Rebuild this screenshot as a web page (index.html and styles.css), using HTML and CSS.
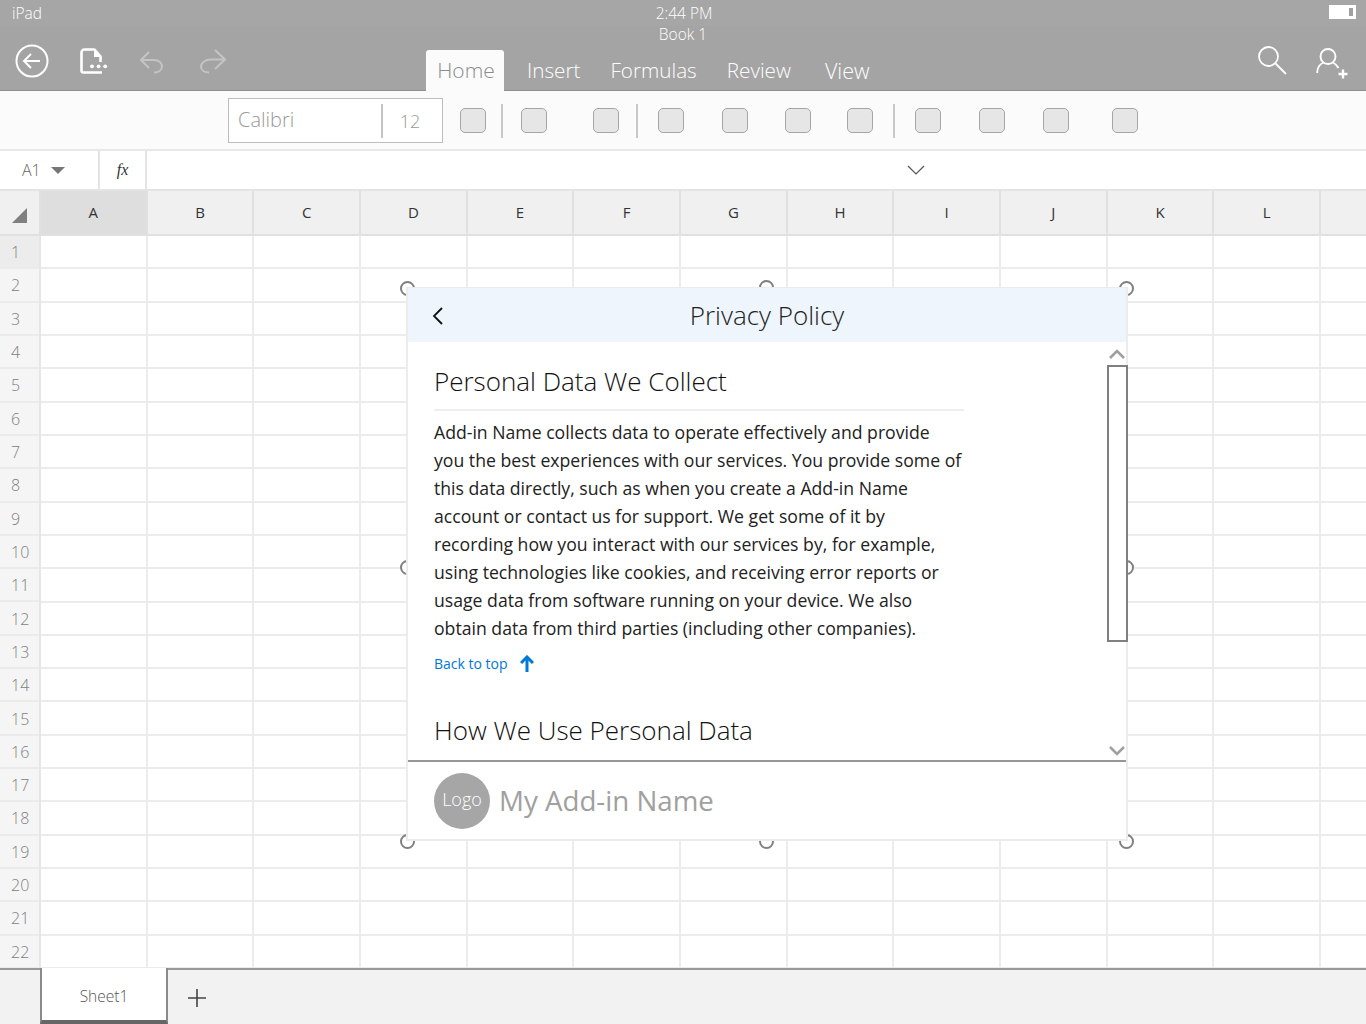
FILE: index.html
```html
<!DOCTYPE html>
<html lang="en">
<head>
<meta charset="utf-8">
<title>Book 1</title>
<link rel="stylesheet" href="styles.css">
</head>
<body>
<div class="app">
  <header class="header">
    <div class="status">
      <span class="device">iPad</span>
      <span class="time">2:44 PM</span>
      <span class="battery"><i></i></span>
    </div>
    <div class="title">Book 1</div>
    <div class="nav">
      <div class="nav-left">
        <svg class="ic-back" viewBox="0 0 34 34" fill="none" stroke="#fff"><circle cx="17" cy="17" r="15.5" stroke-width="2"/><path d="M25 17H9M16 10l-7 7 7 7" stroke-width="2"/></svg>
        <svg class="ic-doc" viewBox="0 0 28 26" fill="none"><path d="M20.5 14V8.5L14.5 1.5H4.5a3 3 0 0 0-3 3v18a2 2 0 0 0 2 2H22" stroke="#fff" stroke-width="2.6" stroke-linejoin="round"/><path d="M14 1.5v7.5h7z" fill="#fff"/><circle cx="12" cy="18.3" r="1.9" fill="#fff"/><circle cx="18.6" cy="18.3" r="1.9" fill="#fff"/><circle cx="25.2" cy="18.3" r="1.9" fill="#fff"/></svg>
        <svg class="ic-undo" viewBox="0 0 24 24" fill="none" stroke="#c4c4c4" stroke-width="2"><path d="M9 2L1 10l8 8M1 10h13c5 0 8 3 8 6.5s-3 6-8 6"/></svg>
        <svg class="ic-redo" viewBox="0 0 26 26" fill="none" stroke="#c4c4c4" stroke-width="2"><path d="M15 2l10 9.5L15 21M25 11.5H11c-6 0-10 3.5-10 7s3 6 8 6"/></svg>
      </div>
      <nav class="tabs">
        <span class="tab active">Home</span>
        <span class="tab t-insert">Insert</span>
        <span class="tab t-formulas">Formulas</span>
        <span class="tab t-review">Review</span>
        <span class="tab t-view">View</span>
      </nav>
      <div class="nav-right">
        <svg class="ic-search" viewBox="0 0 29 29" fill="none" stroke="#fff" stroke-width="1.8"><circle cx="10.5" cy="10.5" r="9.5"/><path d="M17 17l11 11"/></svg>
        <svg class="ic-person" viewBox="0 0 32 34" fill="none" stroke="#fff" stroke-width="1.9"><circle cx="12" cy="10.5" r="7.5"/><path d="M1.2 27c0-5 3-9 6.3-10.5M16.8 16.5c2 1 4.6 3 5.7 5.5"/><path d="M27 23.5v9M22.5 28h9" stroke-width="2.4"/></svg>
      </div>
    </div>
  </header>

  <section class="ribbon">
    <div class="fontbox"><span class="fname">Calibri</span><span class="fsize">12</span></div>
    <span class="btn m17"></span><span class="sep m15"></span>
    <span class="btn m18"></span><span class="btn m46"></span><span class="sep m17"></span>
    <span class="btn m20"></span><span class="btn m38"></span><span class="btn m37"></span><span class="btn m36"></span><span class="sep m20"></span>
    <span class="btn m20"></span><span class="btn m38"></span><span class="btn m38"></span><span class="btn m43"></span>
  </section>

  <section class="formula">
    <div class="namebox">A1<span class="caret"></span></div>
    <div class="fx">fx</div>
    <div class="finput"><svg class="ic-chev" viewBox="0 0 18 11" fill="none" stroke="#555" stroke-width="1.2"><path d="M1 1l8 8 8-8"/></svg></div>
  </section>

  <section class="sheet">
    <div class="colheads">
      <div class="corner"><span class="tri"></span></div>
      <div class="ch sel">A</div><div class="ch">B</div><div class="ch">C</div><div class="ch">D</div><div class="ch">E</div><div class="ch">F</div><div class="ch">G</div><div class="ch">H</div><div class="ch">I</div><div class="ch">J</div><div class="ch">K</div><div class="ch">L</div><div class="ch"></div>
    </div>
    <div class="body">
      <div class="rowheads">
        <div class="rh sel">1</div><div class="rh">2</div><div class="rh">3</div><div class="rh">4</div><div class="rh">5</div><div class="rh">6</div><div class="rh">7</div><div class="rh">8</div><div class="rh">9</div><div class="rh">10</div><div class="rh">11</div><div class="rh">12</div><div class="rh">13</div><div class="rh">14</div><div class="rh">15</div><div class="rh">16</div><div class="rh">17</div><div class="rh">18</div><div class="rh">19</div><div class="rh">20</div><div class="rh">21</div><div class="rh">22</div>
      </div>
      <div class="cells"></div>
    </div>
  </section>

  <footer class="sheetbar">
    <div class="sheettab">Sheet1</div>
    <svg class="ic-plus" viewBox="0 0 18 18" fill="none" stroke="#444" stroke-width="1.6"><path d="M9 0v18M0 9h18"/></svg>
  </footer>

  <div class="overlay">
    <span class="h h-tl"></span><span class="h h-tc"></span><span class="h h-tr"></span>
    <span class="h h-ml"></span><span class="h h-mr"></span>
    <span class="h h-bl"></span><span class="h h-bc"></span><span class="h h-br"></span>
    <div class="panel">
      <div class="panel-head">
        <svg class="ic-left" viewBox="0 0 11 18" fill="none" stroke="#111" stroke-width="1.8"><path d="M10 1L2 9l8 8"/></svg>
        <span class="panel-title">Privacy Policy</span>
      </div>
      <div class="panel-body">
        <div class="content">
          <h2 class="h-first">Personal Data We Collect</h2>
          <p>Add-in Name collects data to operate effectively and provide<br>you the best experiences with our services. You provide some of<br>this data directly, such as when you create a Add-in Name<br>account or contact us for support. We get some of it by<br>recording how you interact with our services by, for example,<br>using technologies like cookies, and receiving error reports or<br>usage data from software running on your device. We also<br>obtain data from third parties (including other companies).</p>
          <a class="top" href="#">Back to top<svg class="ic-up" viewBox="0 0 14 17" fill="none" stroke="#0078d7" stroke-width="3"><path d="M7 17V2M1 8l6-6 6 6"/></svg></a>
          <h2 class="h-second">How We Use Personal Data</h2>
        </div>
        <div class="scroll">
          <svg class="ic-sc" viewBox="0 0 16 10" fill="none" stroke="#a0a0a0" stroke-width="2.6"><path d="M1 9l7-7 7 7"/></svg>
          <div class="thumb"></div>
          <svg class="ic-sc last" viewBox="0 0 16 10" fill="none" stroke="#a0a0a0" stroke-width="2.6"><path d="M1 1l7 7 7-7"/></svg>
        </div>
      </div>
      <div class="panel-foot">
        <span class="logo">Logo</span>
        <span class="addin">My Add-in Name</span>
      </div>
    </div>
  </div>
</div>
</body>
</html>
```
FILE: styles.css
```css
* { box-sizing: border-box; }
html, body { margin: 0; padding: 0; }
body { background: #fff; font-family: "Open Sans", "Noto Sans", sans-serif; font-weight: 300; color: #222; }
.app { position: relative; width: 1366px; height: 1024px; overflow: hidden; display: flex; flex-direction: column; }

/* header */
.header { height: 91px; background: #a4a4a4; border-bottom: 1px solid #8e8e8e; color: #fff; display: flex; flex-direction: column; }
.status { height: 26px; background: #a6a6a6; display: grid; grid-template-columns: 1fr auto 1fr; align-items: center; font-size: 15.5px; padding: 0 10px 0 12px; }
.battery { justify-self: end; width: 27px; height: 14px; background: #fff; position: relative; margin-bottom: 2px; }
.battery i { position: absolute; right: 3px; top: 3px; width: 4px; height: 8px; background: #a0a0a0; }
.title { height: 18px; line-height: 17px; text-align: center; font-size: 15.5px; }
.nav { height: 46px; display: grid; grid-template-columns: 426px 1fr auto; }
.nav-left { display: flex; align-items: flex-start; padding-left: 15px; }
.ic-back { width: 34px; height: 34px; }
.ic-doc { width: 28px; height: 26px; margin: 4px 0 0 31px; }
.ic-undo { width: 24px; height: 24px; margin: 6px 0 0 32px; }
.ic-redo { width: 26px; height: 26px; margin: 4px 0 0 36px; }
.tabs { display: flex; align-items: flex-end; font-size: 20.7px; }
.tab { height: 40px; line-height: 41px; white-space: nowrap; }
.tab.active { width: 78px; margin-bottom: -1px; height: 41px; text-align: center; background: #fbfbfb; color: #8c8c8c; border-radius: 3px 3px 0 0; padding-left: 2px; font-size: 21px; }
.t-insert { margin-left: 23px; }
.t-formulas { margin-left: 30px; }
.t-review { margin-left: 30px; }
.t-view { margin-left: 34px; font-size: 21.5px; }
.nav-right { display: flex; align-items: flex-start; padding-right: 18px; }
.ic-search { width: 29px; height: 29px; margin-top: 2px; }
.ic-person { width: 32px; height: 34px; margin: 2px 0 0 29px; }

/* ribbon */
.ribbon { height: 61px; background: #fbfbfb; border-bottom: 2px solid #e8e8e8; display: flex; align-items: flex-start; padding-left: 228px; }
.fontbox { width: 215px; height: 45px; margin-top: 7px; background: #fff; border: 1px solid #bdbdbd; display: flex; align-items: center; color: #999; }
.fname { width: 154px; height: 34px; line-height: 32px; padding-left: 9px; font-size: 20px; border-right: 2px solid #c4c4c4; }
.fsize { flex: 1; text-align: center; font-size: 18px; padding-right: 5px; }
.btn { width: 26px; height: 25px; margin-top: 17px; background: #e6e6e6; border: 1px solid #a6a6a6; border-bottom-width: 1.5px; border-radius: 5px; flex: none; }
.sep { width: 2px; height: 34px; margin-top: 13px; background: #c8c8c8; flex: none; }
.m15 { margin-left: 15px; } .m17 { margin-left: 17px; } .m18 { margin-left: 18px; }
.m20 { margin-left: 20px; } .m36 { margin-left: 36px; }
.m37 { margin-left: 37px; } .m38 { margin-left: 38px; } .m43 { margin-left: 43px; } .m46 { margin-left: 46px; }

/* formula */
.formula { height: 40px; background: #fff; display: flex; border-bottom: 2px solid #e4e4e4; }
.namebox { width: 100px; border-right: 2px solid #e4e4e4; padding-left: 22px; font-size: 16px; color: #666; line-height: 37px; display: flex; align-items: center; }
.caret { width: 0; height: 0; margin-left: 10px; margin-top: 1px; border-left: 7px solid transparent; border-right: 7px solid transparent; border-top: 7px solid #777; }
.fx { width: 47px; border-right: 2px solid #e4e4e4; text-align: center; font: italic 16px/37px "Liberation Serif", serif; color: #333; }
.finput { flex: 1; display: flex; align-items: center; padding-left: 760px; }
.ic-chev { width: 18px; height: 11px; }

/* sheet */
.sheet { flex: none; height: 778px; display: flex; flex-direction: column; }
.colheads { height: 45px; display: flex; background: #f0f0f0; border-bottom: 2px solid #e0e0e0; }
.corner { width: 41px; flex: none; border-right: 2px solid #e0e0e0; position: relative; }
.tri { position: absolute; left: 12px; bottom: 11px; width: 0; height: 0; border-left: 15px solid transparent; border-bottom: 15px solid #808080; }
.ch { width: 106.68px; flex: none; text-align: center; font-size: 15px; font-weight: 400; color: #333; line-height: 42px; border-right: 2px solid #e0e0e0; }
.ch.sel { background: #dedede; }
.body { flex: 1; display: flex; }
.rowheads { width: 41px; flex: none; display: flex; flex-direction: column; background: #f5f5f5; border-right: 2px solid #e6e6e6; }
.rh { flex: 1; display: flex; align-items: center; padding: 1px 0 0 11px; font-size: 16px; color: #808080; border-bottom: 2px solid #ebebeb; }
.rh.sel { background: #ececec; }
.cells { flex: 1; background-image:
  repeating-linear-gradient(to right, transparent 0, transparent 104.68px, #ececec 104.68px, #ececec 106.68px),
  repeating-linear-gradient(to bottom, transparent 0, transparent 31.32px, #ececec 31.32px, #ececec 33.32px); }

/* bottom bar */
.sheetbar { flex: 1; margin-top: -1px; background: #f2f2f2; border-top: 2px solid #999; display: flex; align-items: center; padding-left: 40px; }
.sheettab { width: 128px; height: 56px; margin-top: -2px; align-self: flex-start; background: #fff; border-left: 2px solid #8a8a8a; border-right: 2px solid #8a8a8a; border-bottom: 4px solid #666; text-align: center; font-size: 15.5px; color: #555; line-height: 56px; }
.ic-plus { width: 18px; height: 18px; margin-left: 20px; margin-top: 2px; }

/* dialog */
.overlay { position: absolute; left: 406px; top: 287px; width: 722px; height: 554px; z-index: 1; }
.h { position: absolute; width: 15px; height: 15px; border: 2px solid #808080; border-radius: 50%; background: #fff; }
.h-tl { left: -6px; top: -6px; } .h-tc { left: 353px; top: -7px; } .h-tr { left: 713px; top: -6px; }
.h-ml { left: -6px; top: 273px; } .h-mr { left: 713px; top: 273px; }
.h-bl { left: -6px; top: 547px; } .h-bc { left: 353px; top: 547px; } .h-br { left: 713px; top: 547px; }
.panel { position: relative; width: 100%; height: 100%; background: #fff; border: solid #ececec; border-width: 1px 2px 2px; display: flex; flex-direction: column; }
.panel-head { height: 54px; flex: none; background: #eef5fc; display: flex; align-items: center; justify-content: center; position: relative; }
.ic-left { position: absolute; left: 24px; top: 19px; width: 11px; height: 18px; }
.panel-title { font-size: 26px; color: #222; line-height: 58px; }
.panel-body { flex: none; height: 420px; display: flex; border-bottom: 2px solid #979797; }
.content { width: 699px; flex: none; padding-left: 26px; }
.content h2 { margin: 0; font-weight: 300; font-size: 26px; color: #111; white-space: nowrap; }
.h-first { width: 530px; height: 69px; padding-top: 17px; line-height: 44px; border-bottom: 2px solid #eee; }
.content p { margin: 7px 0 0; font-size: 17.65px; line-height: 28px; font-weight: 400; color: #222; white-space: nowrap; }
.top { display: flex; align-items: center; margin-top: 7px; height: 28px; font-size: 14px; font-weight: 400; color: #0078d7; text-decoration: none; }
.ic-up { width: 14px; height: 17px; margin-left: 12px; }
.content .h-second { margin-top: 31px; line-height: 44px; }
.scroll { width: 21px; flex: none; display: flex; flex-direction: column; align-items: center; padding-top: 7px; }
.ic-sc { width: 16px; height: 10px; flex: none; margin-left: -2px; }
.thumb { width: 21px; height: 277px; margin-top: 6px; border: 2px solid #808080; background: #fff; flex: none; }
.ic-sc.last { margin-top: 104px; }
.panel-foot { flex: 1; display: flex; align-items: center; padding-left: 26px; }
.logo { width: 56px; height: 56px; border-radius: 50%; background: #a6a6a6; color: #fff; font-size: 18px; text-align: center; line-height: 52px; flex: none; }
.addin { margin: -2px 0 0 9px; font-size: 27.7px; color: #a0a0a0; font-weight: 400; white-space: nowrap; }
```
